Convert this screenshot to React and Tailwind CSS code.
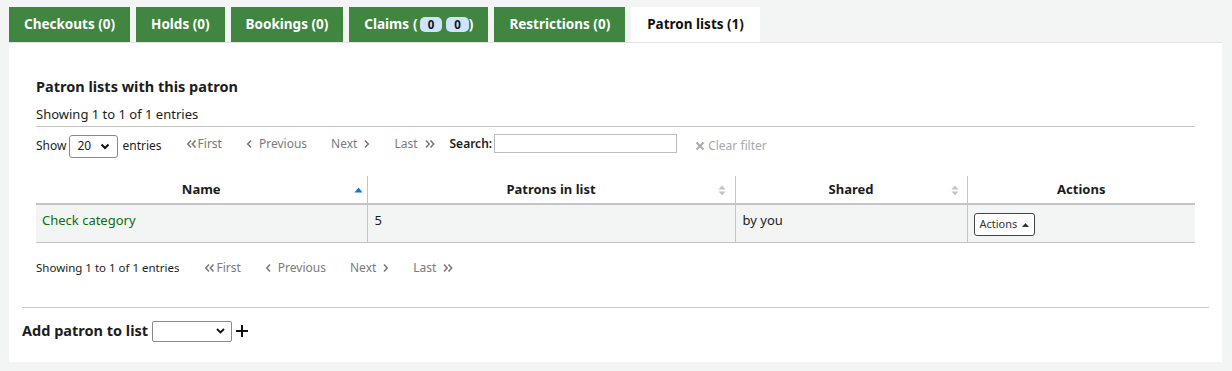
import React from "react";

const tabs = [
  { label: "Checkouts (0)" },
  { label: "Holds (0)" },
  { label: "Bookings (0)" },
  { label: "Claims", claims: true },
  { label: "Restrictions (0)" },
  { label: "Patron lists (1)", active: true },
];

const Chev = ({ dir = "left", double = false }) => (
  <svg width={double ? 11 : 7} height="10" viewBox={double ? "0 0 11 10" : "0 0 7 10"} className="inline-block">
    {dir === "left" ? (
      <>
        <path d="M5 1.5 L1.8 5 L5 8.5" fill="none" stroke="currentColor" strokeWidth="1.6" />
        {double && <path d="M9.5 1.5 L6.3 5 L9.5 8.5" fill="none" stroke="currentColor" strokeWidth="1.6" />}
      </>
    ) : (
      <>
        <path d="M2 1.5 L5.2 5 L2 8.5" fill="none" stroke="currentColor" strokeWidth="1.6" />
        {double && <path d="M6.5 1.5 L9.7 5 L6.5 8.5" fill="none" stroke="currentColor" strokeWidth="1.6" />}
      </>
    )}
  </svg>
);

const Pager = () => (
  <div className="flex items-center text-[12px] text-[#7a7a7a]">
    <span className="flex items-center gap-[1px] px-[10px]"><Chev dir="left" double />First</span>
    <span className="flex items-center gap-[6px] px-[10px] ml-[4px]"><Chev dir="left" />Previous</span>
    <span className="flex items-center gap-[6px] px-[10px] ml-[4px]">Next<Chev dir="right" /></span>
    <span className="flex items-center gap-[6px] px-[10px] ml-[4px]">Last<Chev dir="right" double /></span>
  </div>
);

const SortBoth = () => (
  <svg width="8" height="11" viewBox="0 0 8 11" className="text-[#c4c4c4]">
    <path d="M4 0.5 L7.5 4.5 L0.5 4.5 Z" fill="currentColor" />
    <path d="M4 10.5 L7.5 6.5 L0.5 6.5 Z" fill="currentColor" />
  </svg>
);

const SortAsc = () => (
  <svg width="9" height="6" viewBox="0 0 9 6">
    <path d="M4.5 0.5 L8.5 5.5 L0.5 5.5 Z" fill="#1a73d4" />
  </svg>
);

export default function App() {
  return (
    <div className="w-[1232px] h-[371px] bg-[#f3f4f4] pt-[7px] text-[#1c1c1c]" style={{ fontFamily: '"Noto Sans", "Open Sans", sans-serif' }}>
      <div className="ml-[9px] w-[1213px]">
        <div className="flex gap-[6px] h-[35px]">
          {tabs.map((t) => (
            <div
              key={t.label}
              className={
                "flex items-center px-[15px] text-[13.5px] font-bold " +
                (t.active ? "bg-white text-[#111] px-[16px]" : "bg-[#408540] text-white")
              }
            >
              {t.label}
              {t.claims && (
                <span className="flex items-center ml-[4px]">
                  (
                  <span className="bg-[#cfe2ff] text-[#111] rounded-[5px] px-[8px] text-[11.5px] leading-[15px] ml-[2px]">0</span>
                  <span className="bg-[#cfe2ff] text-[#111] rounded-[5px] px-[8px] text-[11.5px] leading-[15px] ml-[4px]">0</span>
                  )
                </span>
              )}
            </div>
          ))}
        </div>
        <div className="bg-white border-t border-[#e2e2e2] h-[320px] pt-[33px]">
          <div className="mx-[27px]">
            <h3 className="text-[14.5px] font-bold leading-[20px]">Patron lists with this patron</h3>
            <div className="text-[13px] mt-[9px] leading-[18px] pb-[3px] border-b border-[#c4c4c4]">Showing 1 to 1 of 1 entries</div>
            <div className="flex items-center h-[38px] text-[12px]">
              <span>Show</span>
              <div className="ml-[3px] w-[49px] h-[23px] border border-[#8a8a8a] rounded-[3px] flex items-center justify-between px-[7px] text-[12px]">
                <span>20</span>
                <svg width="10" height="7" viewBox="0 0 10 7"><path d="M1.5 1.5 L5 5 L8.5 1.5" fill="none" stroke="#111" strokeWidth="2" /></svg>
              </div>
              <span className="ml-[4px]">entries</span>
              <div className="ml-[14px] -mt-[5px]"><Pager /></div>
              <span className="ml-[5px] font-semibold -mt-[5px]">Search:</span>
              <div className="ml-[2px] w-[183px] h-[19px] border border-[#bdbdbd] -mt-[5px]"></div>
              <span className="ml-[18px] flex items-center gap-[3px] text-[#a8a8a8]">
                <svg width="10" height="10" viewBox="0 0 10 10"><path d="M1.5 1.5 L8.5 8.5 M8.5 1.5 L1.5 8.5" stroke="currentColor" strokeWidth="1.8" /></svg>
                Clear filter
              </span>
            </div>
            <table className="w-full border-collapse text-[13px] mt-[11px]">
              <thead>
                <tr className="h-[28px] border-b-2 border-[#c4c4c4]">
                  <th className="w-[331px] border-r border-[#c4c4c4] font-bold relative">
                    Name
                    <span className="absolute right-[4px] top-[11px]"><SortAsc /></span>
                  </th>
                  <th className="w-[368px] border-r border-[#c4c4c4] border-l font-bold relative">
                    Patrons in list
                    <span className="absolute right-[9px] top-[9px]"><SortBoth /></span>
                  </th>
                  <th className="w-[232px] border-r border-[#c4c4c4] font-bold relative">
                    Shared
                    <span className="absolute right-[8px] top-[9px]"><SortBoth /></span>
                  </th>
                  <th className="font-bold">Actions</th>
                </tr>
              </thead>
              <tbody>
                <tr className="bg-[#f3f4f4] h-[38px] border-b border-[#c4c4c4] align-top">
                  <td className="border-r border-[#c4c4c4] px-[6px] pt-[6px] text-[#0d6e0d]">Check category</td>
                  <td className="border-r border-[#c4c4c4] px-[7px] pt-[6px]">5</td>
                  <td className="border-r border-[#c4c4c4] px-[7px] pt-[6px]">by you</td>
                  <td className="px-[6px] pt-[8px]">
                    <span className="inline-flex items-center gap-[5px] border border-[#444] rounded-[3px] bg-white px-[5px] h-[23px] text-[11px] text-[#333]">
                      Actions
                      <svg width="7" height="4" viewBox="0 0 7 4"><path d="M3.5 0 L7 4 L0 4 Z" fill="#333" /></svg>
                    </span>
                  </td>
                </tr>
              </tbody>
            </table>
            <div className="flex items-center h-[50px] text-[11.5px]">
              <span>Showing 1 to 1 of 1 entries</span>
              <div className="ml-[15px]"><Pager /></div>
            </div>
          </div>
          <div className="mx-[13px] border-t border-[#c8c8c8] mt-[14px]"></div>
          <div className="flex items-center mx-[13px] mt-[13px] h-[21px]">
            <span className="text-[14.5px] font-bold">Add patron to list</span>
            <div className="ml-[4px] w-[80px] h-[21px] border border-[#8a8a8a] rounded-[2px] flex items-center justify-end pr-[6px]">
              <svg width="9" height="6" viewBox="0 0 9 6"><path d="M1 1 L4.5 4.5 L8 1" fill="none" stroke="#111" strokeWidth="1.8" /></svg>
            </div>
            <svg width="14" height="14" viewBox="0 0 14 14" className="ml-[3px]"><path d="M7 1 V13 M1 7 H13" stroke="#111" strokeWidth="2" /></svg>
          </div>
        </div>
      </div>
    </div>
  );
}
